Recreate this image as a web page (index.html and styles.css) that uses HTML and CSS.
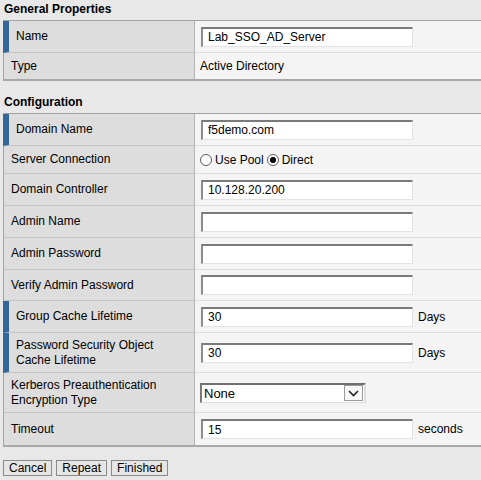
FILE: index.html
```html
<!DOCTYPE html>
<html>
<head>
<meta charset="utf-8">
<link rel="stylesheet" href="styles.css">
</head>
<body>
<div class="page">
  <h2 class="section-title first">General Properties</h2>
  <div class="props">
    <div class="row req h32"><div class="label">Name</div><div class="value"><input class="text" type="text" value="Lab_SSO_AD_Server"></div></div>
    <div class="row h26 last"><div class="label">Type</div><div class="value">Active Directory</div></div>
  </div>

  <h2 class="section-title">Configuration</h2>
  <div class="props">
    <div class="row req h32"><div class="label">Domain Name</div><div class="value"><input class="text" type="text" value="f5demo.com"></div></div>
    <div class="row h28"><div class="label">Server Connection</div><div class="value">
      <label class="radio"><input type="radio" name="conn"> Use Pool</label>
      <label class="radio"><input type="radio" name="conn" checked> Direct</label>
    </div></div>
    <div class="row h32"><div class="label">Domain Controller</div><div class="value"><input class="text" type="text" value="10.128.20.200"></div></div>
    <div class="row h32"><div class="label">Admin Name</div><div class="value"><input class="text" type="text" value=""></div></div>
    <div class="row h32"><div class="label">Admin Password</div><div class="value"><input class="text" type="password" value=""></div></div>
    <div class="row h31"><div class="label">Verify Admin Password</div><div class="value"><input class="text" type="password" value=""></div></div>
    <div class="row req h32"><div class="label">Group Cache Lifetime</div><div class="value"><input class="text" type="text" value="30"><span class="unit">Days</span></div></div>
    <div class="row req h40"><div class="label">Password Security Object<br>Cache Lifetime</div><div class="value"><input class="text" type="text" value="30"><span class="unit">Days</span></div></div>
    <div class="row h40"><div class="label">Kerberos Preauthentication<br>Encryption Type</div><div class="value">
      <span class="select"><select><option>None</option></select><span class="arrow"><svg width="11" height="7" viewBox="0 0 11 7"><path d="M1 1 L5.5 5.5 L10 1" fill="none" stroke="#222" stroke-width="1.6"/></svg></span></span>
    </div></div>
    <div class="row h32 last"><div class="label">Timeout</div><div class="value"><input class="text" type="text" value="15"><span class="unit">seconds</span></div></div>
  </div>

  <div class="buttons">
    <button class="btn">Cancel</button>
    <button class="btn">Repeat</button>
    <button class="btn">Finished</button>
  </div>
</div>
</body>
</html>
```

FILE: styles.css
```css
html, body {
  margin: 0;
  padding: 0;
  background: #e8e8e8;
}
body {
  font-family: "Liberation Sans", Arial, sans-serif;
  font-size: 12px;
  color: #000;
}
.page {
  padding-left: 3px;
}
.section-title {
  font-size: 12px;
  font-weight: bold;
  line-height: 15px;
  margin: 14px 0 3px 1px;
}
.section-title.first {
  margin-top: 2px;
}
.props {
  border-top: 1px solid #a3a3a3;
  border-bottom: 2px solid #a8a8a8;
}
.row {
  display: grid;
  grid-template-columns: 192px 1fr;
}
.h26 { height: 26px; }
.h28 { height: 28px; }
.h31 { height: 31px; }
.h32 { height: 32px; }
.h40 { height: 40px; }
.label {
  background: #dddddd;
  border-left: 1px solid #a3a3a3;
  border-right: 1px solid #b5b5b5;
  border-bottom: 1px solid #c6c6c6;
  padding-left: 7px;
  display: flex;
  align-items: center;
  line-height: 15px;
}
.row.req .label {
  border-left: 6px solid #336699;
  padding-left: 7px;
}
.value {
  background: #f4f4f4;
  border-bottom: 1px solid #dcdcdc;
  padding-left: 5px;
  display: flex;
  align-items: center;
}
.row.last .label,
.row.last .value {
  border-bottom: none;
}
.text {
  box-sizing: border-box;
  width: 212px;
  height: 20px;
  margin: 0 0 0 1px;
  padding: 0 0 0 5px;
  border-style: solid;
  border-width: 2px 1px 1px 2px;
  border-color: #7a7a7a #e3e3e3 #e3e3e3 #8c8c8c;
  background: #fff;
  font-family: "Liberation Sans", Arial, sans-serif;
  font-size: 12px;
  color: #000;
  outline: none;
}
.unit {
  margin-left: 5px;
}
.radio {
  display: inline-flex;
  align-items: center;
  margin-right: 3px;
}
.radio input {
  appearance: none;
  -webkit-appearance: none;
  width: 12px;
  height: 12px;
  margin: 0 3px 0 0;
  border: 1px solid #5e5e5e;
  border-radius: 50%;
  background: #fff;
}
.radio input:checked {
  background: radial-gradient(circle, #111 0 2.8px, #fff 3.4px);
}
.select {
  display: inline-flex;
  align-items: center;
  box-sizing: border-box;
  width: 166px;
  height: 20px;
  border-style: solid;
  border-width: 2px 2px 1px 2px;
  border-color: #6f6f6f #dedede #dedede #7a7a7a;
  background: #fff;
}
.select select {
  appearance: none;
  -webkit-appearance: none;
  flex: 1;
  border: none;
  background: transparent;
  padding: 0 0 0 2px;
  margin: 0;
  font-family: "Liberation Sans", Arial, sans-serif;
  font-size: 13px;
  color: #000;
  outline: none;
}
.arrow {
  box-sizing: border-box;
  width: 19px;
  height: 16px;
  margin-right: 1px;
  border: 1px solid #9a9a9a;
  background: #f7f7f7;
  display: flex;
  align-items: center;
  justify-content: center;
}
.arrow svg {
  display: block;
}
.buttons {
  display: flex;
  gap: 4px;
  margin-top: 13px;
  padding-left: 0;
}
.btn {
  box-sizing: border-box;
  height: 16px;
  padding: 0 5px;
  margin: 0;
  border: 1px solid #8a8a8a;
  background: #e6e6e6;
  font-family: "Liberation Sans", Arial, sans-serif;
  font-size: 12px;
  line-height: 14px;
  color: #000;
}
```
